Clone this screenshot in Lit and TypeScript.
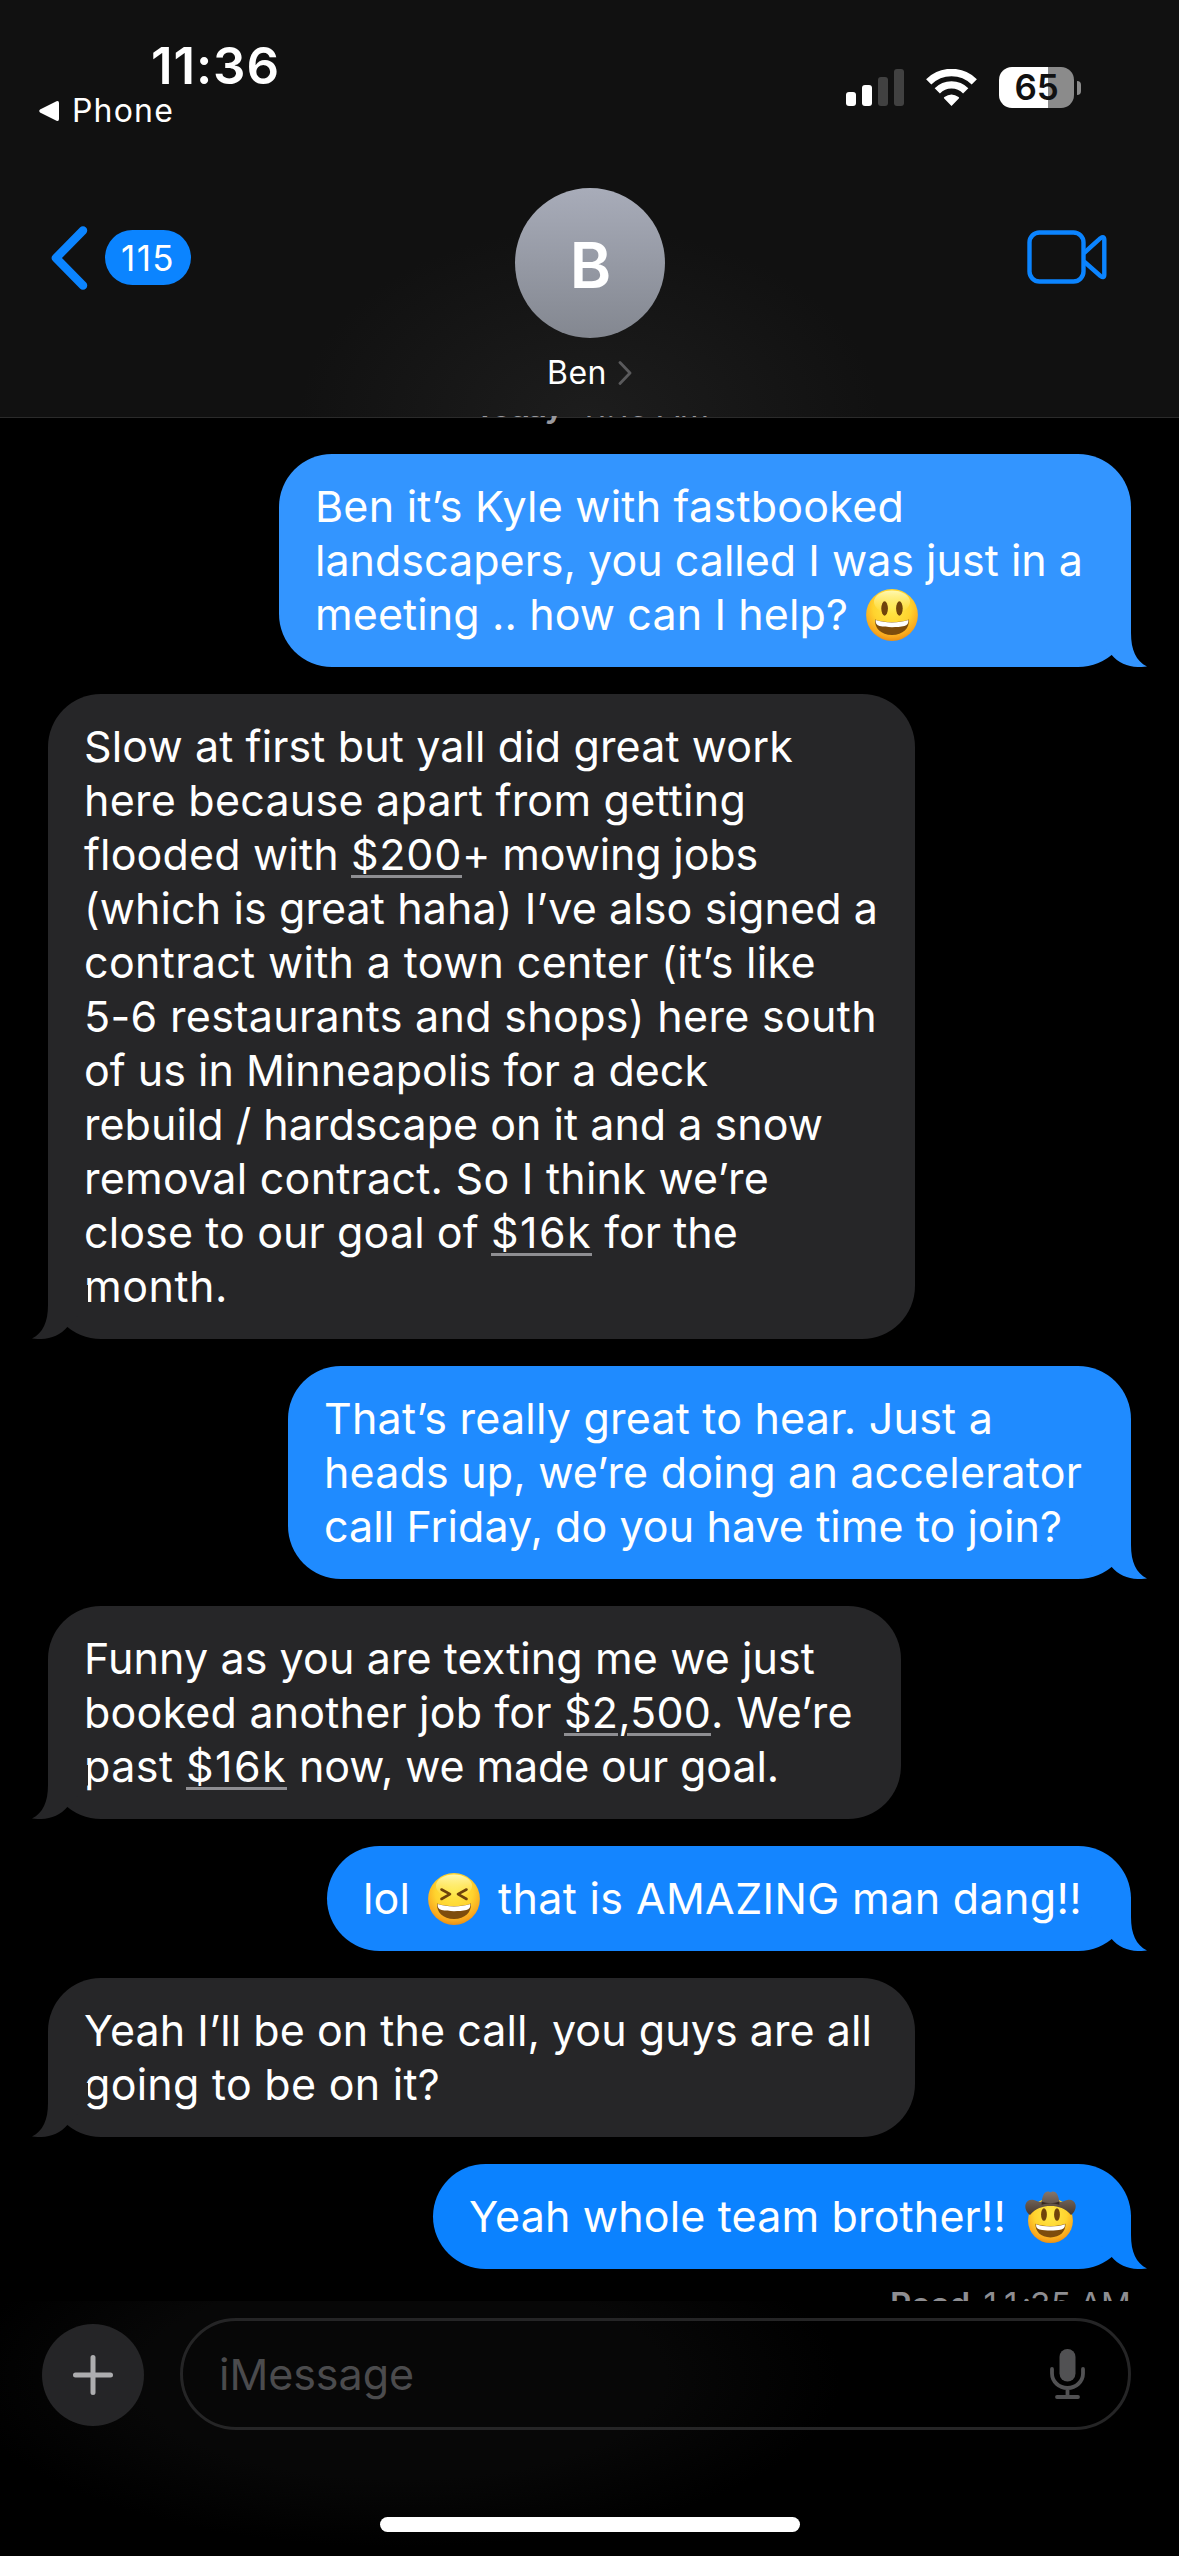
import { LitElement, html, css, svg, nothing } from "lit";
import { customElement, property } from "lit/decorators.js";

type FaceKind = "smile" | "laugh" | "cowboy";
interface Segment {
  text?: string;
  face?: FaceKind;
  width: number;
  gap?: number;
}
interface Message {
  mine: boolean;
  width: number;
  color: string;
  lines: Segment[][];
}

const line = (text: string, width: number): Segment[] => [{ text, width }];

// Amounts between underscores are detected data and get an underline.
const MESSAGES: Message[] = [
  {
    mine: true,
    width: 852,
    color: "#3395ff",
    lines: [
      line("Ben it’s Kyle with fastbooked", 589),
      line("landscapers, you called I was just in a", 768),
      [
        { text: "meeting .. how can I help?", width: 533 },
        { face: "smile", width: 52, gap: 18 },
      ],
    ],
  },
  {
    mine: false,
    width: 867,
    color: "#262628",
    lines: [
      line("Slow at first but yall did great work", 709),
      line("here because apart from getting", 662),
      [
        { text: "flooded with ", width: 267 },
        { text: "_$200_", width: 111 },
        { text: "+ mowing jobs", width: 296 },
      ],
      line("(which is great haha) I’ve also signed a", 794),
      line("contract with a town center (it’s like", 732),
      line("5-6 restaurants and shops) here south", 793),
      line("of us in Minneapolis for a deck", 624),
      line("rebuild / hardscape on it and a snow", 739),
      line("removal contract. So I think we’re", 685),
      [
        { text: "close to our goal of ", width: 407 },
        { text: "_$16k_", width: 101 },
        { text: " for the", width: 146 },
      ],
      line("month.", 144),
    ],
  },
  {
    mine: true,
    width: 843,
    color: "#1f8bff",
    lines: [
      line("That’s really great to hear. Just a", 669),
      line("heads up, we’re doing an accelerator", 758),
      line("call Friday, do you have time to join?", 738),
    ],
  },
  {
    mine: false,
    width: 853,
    color: "#262628",
    lines: [
      line("Funny as you are texting me we just", 731),
      [
        { text: "booked another job for ", width: 480 },
        { text: "_$2,500_", width: 147 },
        { text: ". We’re", width: 142 },
      ],
      [
        { text: "past ", width: 102 },
        { text: "_$16k_", width: 101 },
        { text: " now, we made our goal.", width: 492 },
      ],
    ],
  },
  {
    mine: true,
    width: 804,
    color: "#1485ff",
    lines: [
      [
        { text: "lol", width: 47 },
        { face: "laugh", width: 52, gap: 18 },
        { text: "that is AMAZING man dang!!", width: 584, gap: 18 },
      ],
    ],
  },
  {
    mine: false,
    width: 867,
    color: "#262628",
    lines: [
      line("Yeah I’ll be on the call, you guys are all", 788),
      line("going to be on it?", 356),
    ],
  },
  {
    mine: true,
    width: 698,
    color: "#0b82ff",
    lines: [
      [
        { text: "Yeah whole team brother!!", width: 537 },
        { face: "cowboy", width: 53, gap: 18 },
      ],
    ],
  },
];

/** One line of text, tracked so that it fills the given advance width. */
@customElement("fit-text")
class FitText extends LitElement {
  @property() text = "";
  @property({ type: Number }) width = 0;

  static styles = css`
    :host {
      display: inline-block;
      white-space: pre;
    }
    .amount {
      text-decoration: underline;
      text-decoration-color: #8e8e92;
      text-decoration-thickness: 3px;
      text-underline-offset: 5px;
    }
  `;

  updated() {
    const run = this.renderRoot.querySelector<HTMLElement>(".run");
    if (!run) return;
    run.style.letterSpacing = "0px";
    const natural = run.getBoundingClientRect().width;
    const count = (run.textContent ?? "").length;
    run.style.letterSpacing = `${(this.width - natural) / count}px`;
  }

  render() {
    const parts = this.text.split("_");
    return html`<span class="run"
      >${parts.map((part, i) => (i % 2 ? html`<span class="amount">${part}</span>` : part))}</span
    >`;
  }
}

@customElement("emoji-face")
class EmojiFace extends LitElement {
  @property() kind: FaceKind = "smile";

  static styles = css`
    :host {
      display: inline-flex;
    }
    .face {
      display: block;
      width: 100%;
      height: 52px;
      overflow: visible;
    }
  `;

  private mouth = svg`
    <path d="M9 30.5c9 3.6 25 3.6 34 0 .6 8.500-6 15.500-17 15.500S8.400 39 9 30.500z" fill="#7d4c0c"></path>
    <path d="M9.600 31.100c9 3.300 23.800 3.300 32.800 0 .3 3.300-1.200 5.300-4 6-7.500 1.600-17.300 1.600-24.800 0-2.800-.7-4.300-2.700-4-6z" fill="#fff"></path>`;

  private eyes = svg`
    <ellipse cx="18.600" cy="19.500" rx="3.300" ry="7.200" fill="#6f430b"></ellipse>
    <ellipse cx="33.400" cy="19.500" rx="3.300" ry="7.200" fill="#6f430b"></ellipse>`;

  private squint = svg`
    <g fill="none" stroke="#6f430b" stroke-width="2.600" stroke-linecap="round" stroke-linejoin="round">
      <path d="M13.500 16.500l8.500 4.700-8.500 4.800"></path>
      <path d="M38.500 16.500l-8.500 4.700 8.500 4.800"></path>
    </g>`;

  private hat = svg`
    <path d="M1 13.500c1-3.400 4.300-5.600 8.200-4.500 3.200.9 6 2.600 8 1.600C18 4.500 20 .5 23.500.5c1.400 0 1.700.8 2.500.8s1.100-.8 2.500-.8c3.500 0 5.500 4 6.300 10.100 2 1 4.800-.7 8-1.600 3.900-1.100 7.200 1.100 8.200 4.500.8 3.600-.8 7.800-4.500 10.500C41 17.500 34 15 26 15S11 17.500 5.500 24C1.800 21.300.2 17.100 1 13.500z" fill="url(#felt)"></path>
    <path d="M17.300 10.600c5 2.200 12.400 2.200 17.400 0l.2 3.200c-5.400-1.700-12.400-1.700-17.800 0z" fill="#352820"></path>`;

  render() {
    const cowboy = this.kind === "cowboy";
    return html`<svg class="face" viewBox="0 0 52 52">
      <defs>
        <radialGradient id="skin" cx=".5" cy=".36" r=".66">
          <stop offset="0" stop-color="#ffe94a"></stop>
          <stop offset=".55" stop-color="#ffd32e"></stop>
          <stop offset=".85" stop-color="#f9a81e"></stop>
          <stop offset="1" stop-color="#e88a12"></stop>
        </radialGradient>
        <linearGradient id="shine" x1="0" y1="0" x2="0" y2="1">
          <stop offset="0" stop-color="#fffbb8" stop-opacity=".95"></stop>
          <stop offset="1" stop-color="#fff27a" stop-opacity="0"></stop>
        </linearGradient>
        <linearGradient id="felt" x1="0" y1="0" x2="0" y2="1">
          <stop offset="0" stop-color="#85766b"></stop>
          <stop offset="1" stop-color="#47392f"></stop>
        </linearGradient>
      </defs>
      ${cowboy
        ? svg`<g transform="translate(3.100 6.800) scale(.88)">
            <circle cx="26" cy="26" r="25.500" fill="url(#skin)"></circle>
            <g transform="translate(0 -.5)">${this.eyes}</g>
            <g transform="translate(0 -1)">${this.mouth}</g></g>${this.hat}`
        : svg`<circle cx="26" cy="26" r="25.900" fill="url(#skin)"></circle>
            <ellipse cx="26" cy="13" rx="18" ry="11.500" fill="url(#shine)"></ellipse>
            ${this.kind === "laugh" ? this.squint : this.eyes}${this.mouth}`}
    </svg>`;
  }
}

@customElement("chat-bubble")
class ChatBubble extends LitElement {
  @property({ attribute: false }) message!: Message;

  static styles = css`
    :host {
      display: flex;
      padding: 0 48px;
    }
    :host([mine]) {
      justify-content: flex-end;
    }
    .bubble {
      position: relative;
      box-sizing: border-box;
      padding: 25px 0 26px 36px;
      border-radius: 53px;
    }
    .line {
      display: flex;
      height: 54px;
      line-height: 54px;
      font-size: 43px;
      color: #fff;
    }
    .emoji {
      align-self: center;
      transform: translateY(1px);
    }
    .tail {
      position: absolute;
      bottom: 0;
      right: -16px;
      width: 56px;
      height: 54px;
    }
    .tail.theirs {
      right: auto;
      left: -16px;
      transform: scaleX(-1);
    }
  `;

  render() {
    const m = this.message;
    return html`<div class="bubble" style="width:${m.width}px;background:${m.color}">
      ${m.lines.map(
        (segments) => html`<div class="line">
          ${segments.map((s) =>
            s.face
              ? html`<emoji-face class="emoji" .kind=${s.face} style="width:${s.width}px;margin-left:${s.gap ?? 0}px"></emoji-face>`
              : html`<fit-text .text=${s.text ?? ""} .width=${s.width} style=${s.gap ? `margin-left:${s.gap}px` : nothing}></fit-text>`
          )}
        </div>`
      )}
      <svg class="tail ${m.mine ? "" : "theirs"}" viewBox="0 0 56 54">
        <path d="M0 0H40V20C40 37 45 48 56 53.500C42 55.500 29 52 20.500 41.800L0 20Z" fill=${m.color}></path>
      </svg>
    </div>`;
  }
}

@customElement("app-root")
class AppRoot extends LitElement {
  static styles = css`
    :host {
      display: flex;
      flex-direction: column;
      width: 1179px;
      height: 2556px;
      overflow: hidden;
      background: #000;
      color: #fff;
      font-family: Inter, "Liberation Sans", sans-serif;
    }
    svg {
      display: block;
    }
    .header {
      box-sizing: border-box;
      height: 418px;
      flex: none;
      border-bottom: 1px solid #2b2b2b;
      background: radial-gradient(ellipse 290px 190px at 50% 100%, #1d1d1d, #111 100%);
    }
    .status {
      display: flex;
      justify-content: space-between;
      height: 188px;
    }
    .clock {
      display: flex;
      flex-direction: column;
      padding-top: 38px;
    }
    .time {
      padding-left: 151px;
      font-size: 51px;
      line-height: 55px;
      font-weight: 600;
    }
    .return {
      display: flex;
      align-items: center;
      gap: 12px;
      padding-left: 38px;
      font-size: 32px;
      line-height: 36px;
    }
    .indicators {
      display: flex;
      align-items: center;
      gap: 22px;
      height: 41px;
      padding: 67px 98px 0 0;
    }
    .battery {
      display: flex;
      align-items: center;
      gap: 3px;
    }
    .level {
      display: flex;
      justify-content: center;
      width: 75px;
      height: 41px;
      border-radius: 13px;
      background: linear-gradient(90deg, #fff 65%, #8b8b8b 65%);
      color: #111;
      font-size: 35px;
      line-height: 41px;
      font-weight: 600;
    }
    .nub {
      width: 4px;
      height: 14px;
      border-radius: 0 4px 4px 0;
      background: #8b8b8b;
    }
    .nav {
      display: grid;
      grid-template-columns: 1fr 150px 1fr;
    }
    .back {
      display: flex;
      align-items: center;
      gap: 17px;
      height: 139px;
      padding-left: 51px;
    }
    .badge {
      display: flex;
      align-items: center;
      justify-content: center;
      width: 86px;
      height: 55px;
      border-radius: 28px;
      background: #0b84ff;
      font-size: 35px;
    }
    .contact {
      display: flex;
      flex-direction: column;
      align-items: center;
    }
    .avatar {
      display: flex;
      align-items: center;
      justify-content: center;
      box-sizing: border-box;
      width: 150px;
      height: 150px;
      padding: 3px 0 0 2px;
      border-radius: 50%;
      background: linear-gradient(#a8acb9, #838790);
      font-size: 63px;
      font-weight: 600;
    }
    .name {
      display: flex;
      align-items: center;
      gap: 11px;
      margin-top: 15px;
      font-size: 32px;
      line-height: 40px;
    }
    .video {
      display: flex;
      align-items: center;
      justify-content: flex-end;
      height: 137px;
      padding-right: 72px;
    }
    .thread {
      position: relative;
      display: flex;
      flex-direction: column;
      gap: 27px;
      box-sizing: border-box;
      height: 1885px;
      flex: none;
      margin-top: -2px;
      overflow: hidden;
    }
    .stamp {
      display: flex;
      justify-content: center;
      gap: 18px;
      flex: none;
      height: 40px;
      margin: -31px 0 2px;
      padding-left: 4px;
      line-height: 40px;
      font-size: 33px;
      color: #98989d;
    }
    .read {
      display: flex;
      justify-content: flex-end;
      gap: 11px;
      height: 40px;
      margin-top: -12px;
      padding-right: 49px;
      line-height: 40px;
      font-size: 33px;
      color: #8e8e92;
      font-feature-settings: "tnum";
    }
    .strong {
      font-weight: 600;
    }
    .composer {
      display: flex;
      flex-direction: column;
      align-items: center;
      height: 255px;
      background: radial-gradient(ellipse 440px 170px at 34% 30%, #070707 60%, #000 100%);
    }
    .row {
      display: flex;
      align-items: center;
      align-self: stretch;
      gap: 36px;
      padding: 17px 48px 0 42px;
    }
    .add {
      display: flex;
      align-items: center;
      justify-content: center;
      width: 102px;
      height: 102px;
      margin-top: 2px;
      border-radius: 50%;
      background: #252527;
    }
    .field {
      display: flex;
      align-items: center;
      justify-content: space-between;
      box-sizing: border-box;
      flex: 1;
      height: 112px;
      padding: 0 42px 0 36px;
      border: 3px solid #252526;
      border-radius: 56px;
      font-size: 43px;
      color: #4b4b4d;
    }
    .home {
      width: 420px;
      height: 15px;
      margin-top: 87px;
      border-radius: 8px;
      background: #fff;
    }
  `;

  render() {
    return html`
      <div class="header">
        <div class="status">
          <div class="clock">
            <div class="time"><fit-text text="11:36" width="129"></fit-text></div>
            <div class="return">
              <svg width="22" height="22" viewBox="0 0 22 22">
                <path d="M2 9.500L18.500 1.200Q21 .3 21 3V19Q21 21.700 18.500 20.800L2 12.500Q.2 11 2 9.500Z" fill="#fff"></path>
              </svg>
              <fit-text text="Phone" width="102"></fit-text>
            </div>
          </div>
          <div class="indicators">
            <svg width="58" height="37" viewBox="0 0 58 37">
              <rect x="0" y="23" width="10" height="14" rx="3" fill="#fff"></rect>
              <rect x="16" y="16" width="10" height="21" rx="3" fill="#fff"></rect>
              <rect x="32" y="8" width="10" height="29" rx="3" fill="#414141"></rect>
              <rect x="48" y="0" width="10" height="37" rx="3" fill="#414141"></rect>
            </svg>
            <svg width="51" height="37" viewBox="0 0 51 37">
              <g fill="none" stroke="#fff" stroke-width="7.400">
                <path d="M2.700 12.800A32.500 32.500 0 0 1 48.300 12.800"></path>
                <path d="M11.300 21.800A20 20 0 0 1 39.700 21.800"></path>
              </g>
              <path d="M25.500 37l-7.300-7.400q-.8-1 .2-1.700 7.100-5 14.200 0 1 .7.200 1.700z" fill="#fff"></path>
            </svg>
            <div class="battery">
              <div class="level"><fit-text text="65" width="44"></fit-text></div>
              <div class="nub"></div>
            </div>
          </div>
        </div>
        <div class="nav">
          <div class="back">
            <svg width="37" height="64" viewBox="0 0 37 64">
              <path d="M32 4.500L5 32L32 59.500" fill="none" stroke="#0b84ff" stroke-width="8.500" stroke-linecap="round" stroke-linejoin="round"></path>
            </svg>
            <div class="badge"><fit-text text="115" width="54"></fit-text></div>
          </div>
          <div class="contact">
            <div class="avatar">B</div>
            <div class="name">
              <fit-text text="Ben" width="60"></fit-text>
              <svg width="14" height="24" viewBox="0 0 14 24">
                <path d="M2 1.500L12 12L2 22.500" fill="none" stroke="#5a5a5c" stroke-width="2.800" stroke-linecap="round" stroke-linejoin="round"></path>
              </svg>
            </div>
          </div>
          <div class="video">
            <svg width="80" height="54" viewBox="0 0 80 54">
              <g fill="none" stroke="#0b84ff" stroke-width="4.400" stroke-linejoin="round">
                <rect x="2.500" y="2.500" width="54" height="49" rx="10"></rect>
                <path d="M57 23L73.500 8.200Q77.300 5.500 77.300 9.800V44.500Q77.300 48.800 73.500 46L57 31.500"></path>
              </g>
            </svg>
          </div>
        </div>
      </div>
      <div class="thread">
        <div class="stamp">
          <fit-text class="strong" text="Today" width="88"></fit-text>
          <fit-text text="11:16 AM" width="129"></fit-text>
        </div>
        ${MESSAGES.map((m) => html`<chat-bubble ?mine=${m.mine} .message=${m}></chat-bubble>`)}
        <div class="read">
          <fit-text class="strong" text="Read" width="80"></fit-text>
          <fit-text text="11:35 AM" width="149"></fit-text>
        </div>
      </div>
      <div class="composer">
        <div class="row">
          <div class="add">
            <svg width="40" height="40" viewBox="0 0 40 40">
              <path d="M20 2.500V37.500M2.500 20H37.500" stroke="#adadaf" stroke-width="5" stroke-linecap="round"></path>
            </svg>
          </div>
          <div class="field">
            <fit-text text="iMessage" width="195"></fit-text>
            <svg width="36" height="50" viewBox="0 0 36 50">
              <rect x="9.500" y="0" width="16" height="32.500" rx="8" fill="#515153"></rect>
              <path d="M2 20V24.500A15.500 14.500 0 0 0 33 24.500V20M17.500 39V47M7 48H28" fill="none" stroke="#515153" stroke-width="3.800" stroke-linecap="round"></path>
            </svg>
          </div>
        </div>
        <div class="home"></div>
      </div>
    `;
  }
}
